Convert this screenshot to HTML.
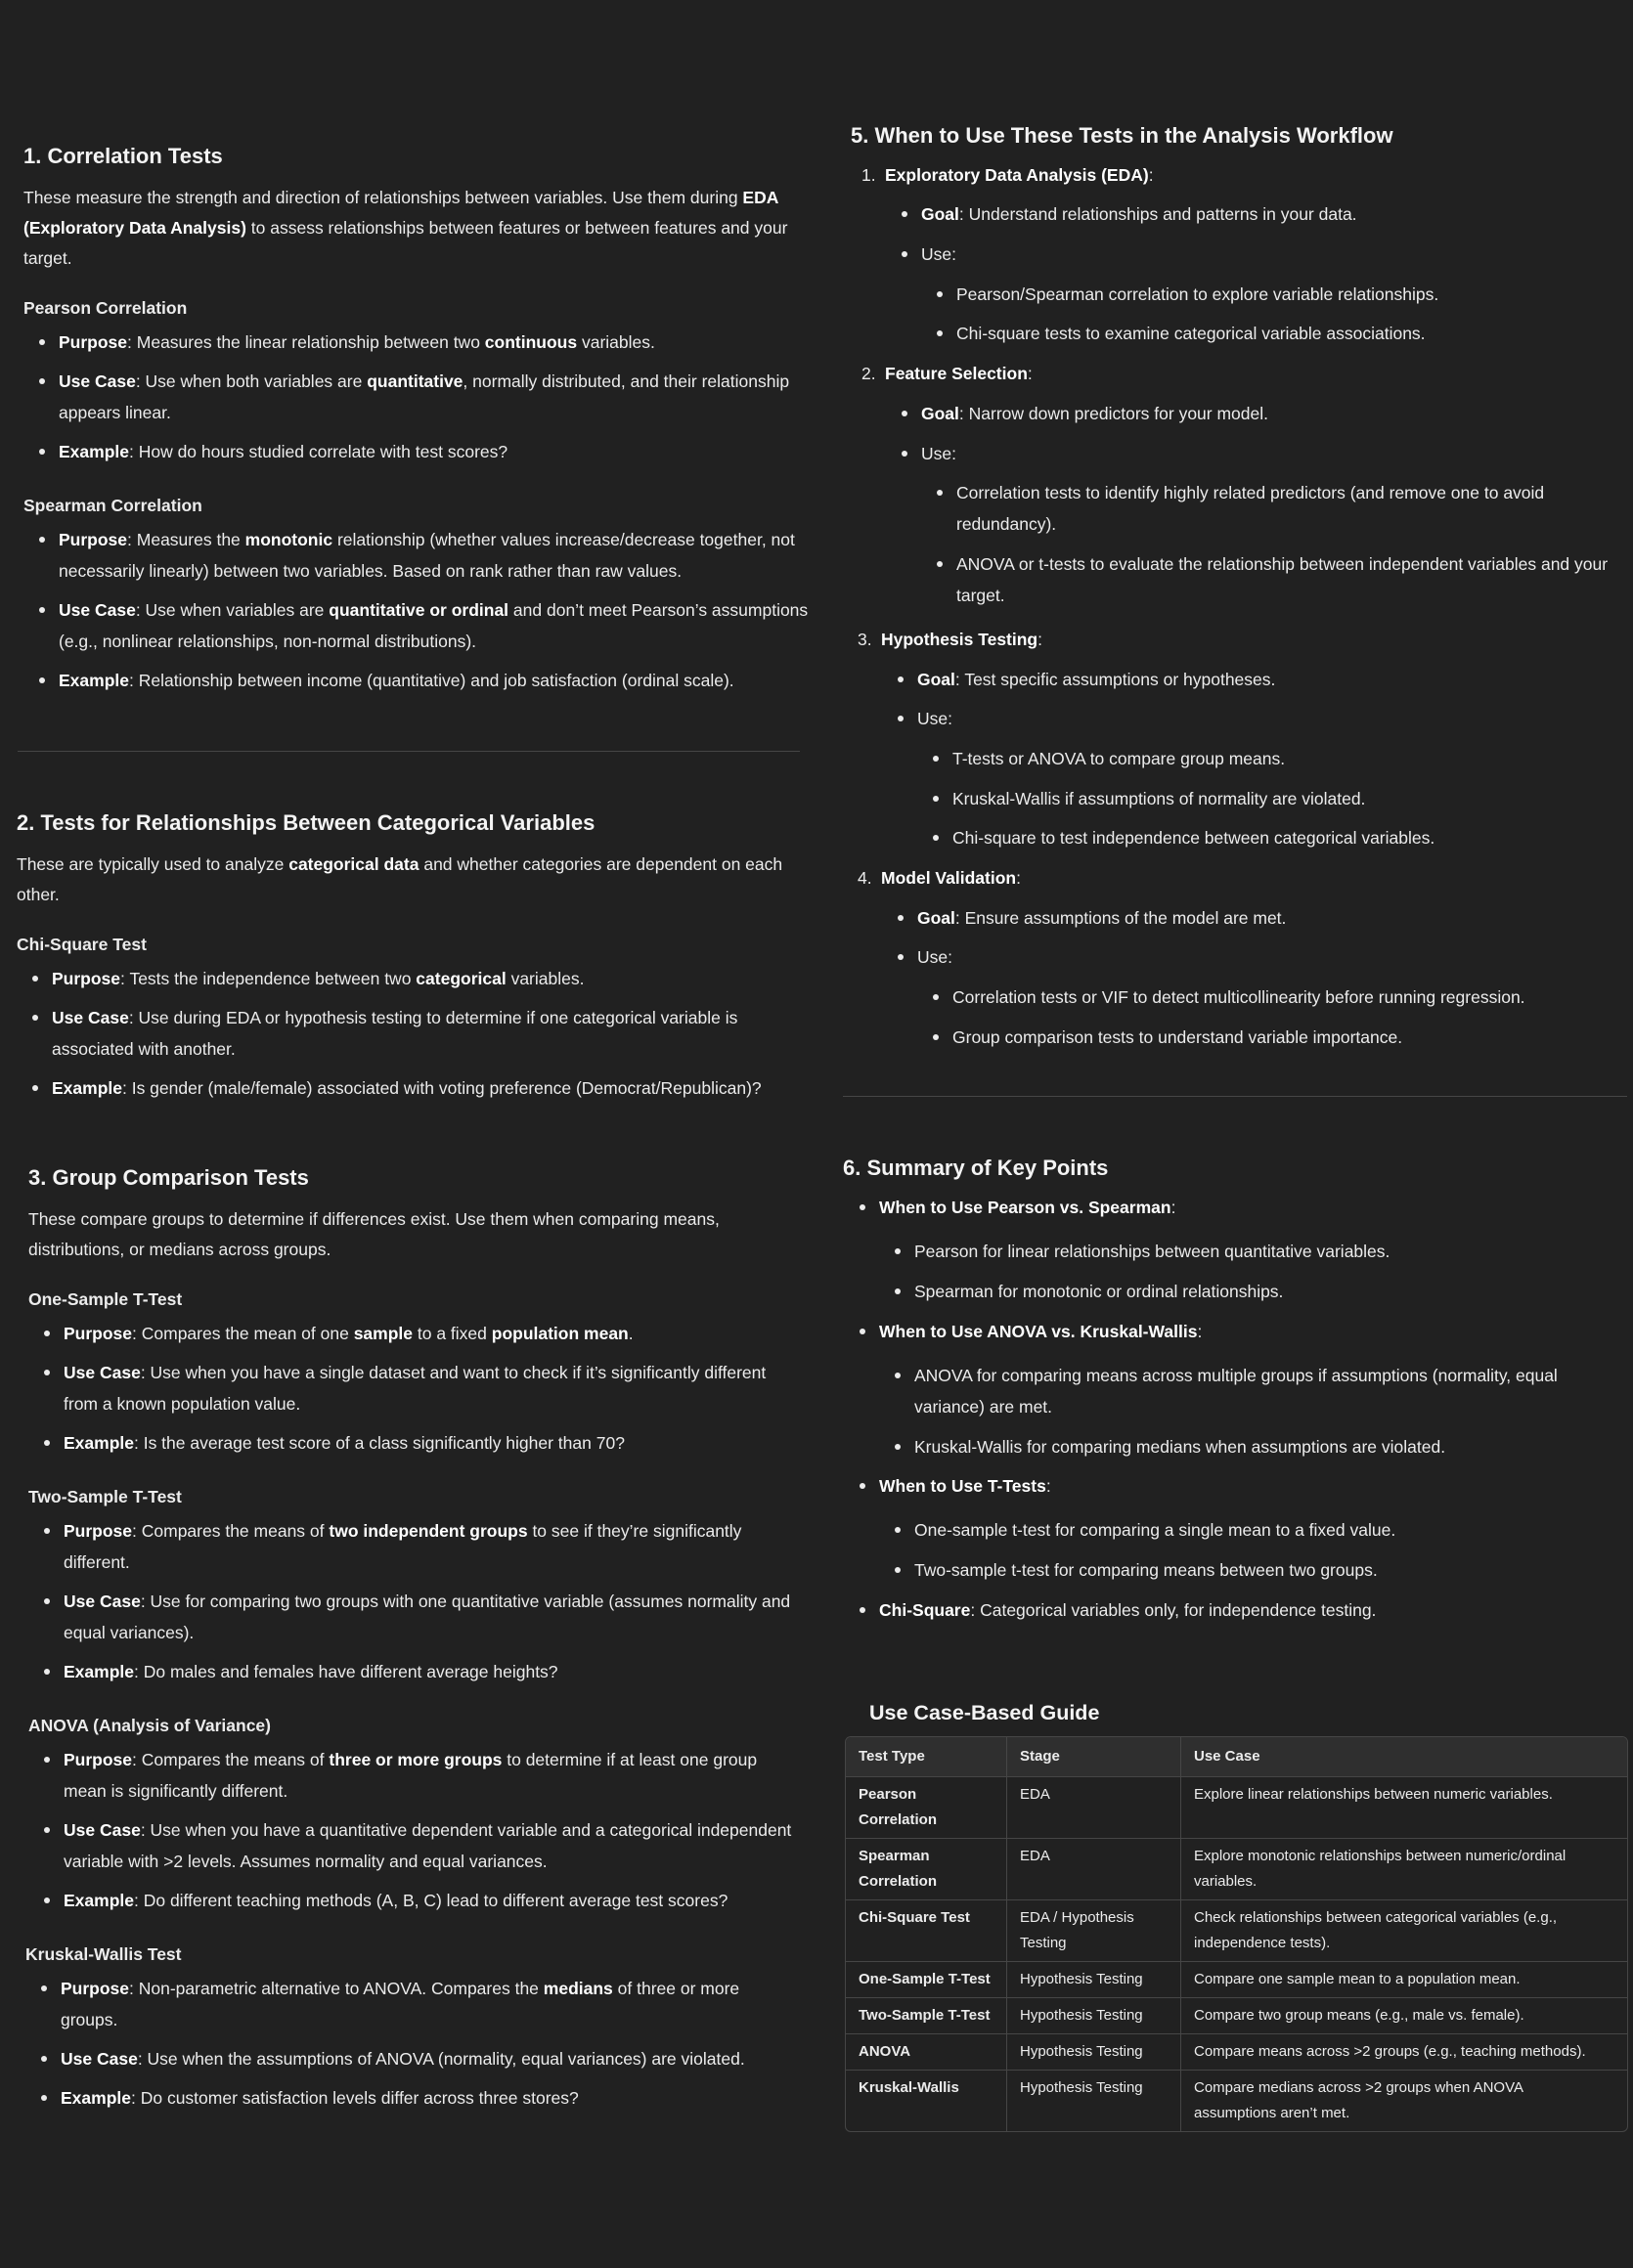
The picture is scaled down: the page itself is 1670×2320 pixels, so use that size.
<!DOCTYPE html>
<html><head><meta charset="utf-8"><style>
html,body{margin:0;padding:0}
body{width:1670px;height:2320px;background:#212121;color:#ececec;font-family:"Liberation Sans",Arial,sans-serif;font-size:17.5px;position:relative;overflow:hidden}
.s{position:absolute;white-space:nowrap}
h3{font-size:22px;font-weight:bold;margin:0;line-height:30px;color:#f4f4f4}
p{margin:12px 0 0;line-height:31px}
h4{font-size:17.5px;font-weight:bold;margin:24px 0 0;line-height:22px}
ul+h4{margin-top:28px}
ul,ol{margin:0;padding:0;list-style:none}
li{position:relative;margin-top:8px;line-height:32px}
.r li{margin-top:8.7px}
.r2 li{margin-top:8.9px}
ul.b>li::before{content:"";position:absolute;left:-20px;top:13px;width:6px;height:6px;border-radius:50%;background:#ececec}
b{font-weight:bold;color:#fff}
.hr{position:absolute;height:1px;background:#464646}
table{position:absolute;border-collapse:separate;border-spacing:0;font-size:15px;border:1px solid #464646;border-radius:6px;overflow:hidden}
td,th{border-right:1px solid #464646;border-bottom:1px solid #464646;padding:5px 13px 5px 13px;line-height:26px;vertical-align:top;text-align:left;white-space:nowrap}
th{background:#2f2f2f;font-weight:bold;padding:7px 13px}
tr>*:last-child{border-right:none}
tr:last-child td{border-bottom:none}
td:first-child{font-weight:bold}
.hl{margin-left:36px;margin-top:5px}
</style></head><body>

<div class="s" style="left:24px;top:145px">
<h3>1. Correlation Tests</h3>
<p>These measure the strength and direction of relationships between variables. Use them during <b>EDA</b><br><b>(Exploratory Data Analysis)</b> to assess relationships between features or between features and your<br>target.</p>
<h4>Pearson Correlation</h4>
<ul class="b hl">
<li><b>Purpose</b>: Measures the linear relationship between two <b>continuous</b> variables.</li>
<li><b>Use Case</b>: Use when both variables are <b>quantitative</b>, normally distributed, and their relationship<br>appears linear.</li>
<li><b>Example</b>: How do hours studied correlate with test scores?</li>
</ul>
<h4>Spearman Correlation</h4>
<ul class="b hl">
<li><b>Purpose</b>: Measures the <b>monotonic</b> relationship (whether values increase/decrease together, not<br>necessarily linearly) between two variables. Based on rank rather than raw values.</li>
<li><b>Use Case</b>: Use when variables are <b>quantitative or ordinal</b> and don’t meet Pearson’s assumptions<br>(e.g., nonlinear relationships, non-normal distributions).</li>
<li><b>Example</b>: Relationship between income (quantitative) and job satisfaction (ordinal scale).</li>
</ul>
</div>

<div class="hr" style="left:18px;top:768px;width:800px"></div>

<div class="s" style="left:17px;top:827px">
<h3>2. Tests for Relationships Between Categorical Variables</h3>
<p>These are typically used to analyze <b>categorical data</b> and whether categories are dependent on each<br>other.</p>
<h4>Chi-Square Test</h4>
<ul class="b hl">
<li><b>Purpose</b>: Tests the independence between two <b>categorical</b> variables.</li>
<li><b>Use Case</b>: Use during EDA or hypothesis testing to determine if one categorical variable is<br>associated with another.</li>
<li><b>Example</b>: Is gender (male/female) associated with voting preference (Democrat/Republican)?</li>
</ul>
</div>

<div class="s" style="left:29px;top:1190px">
<h3>3. Group Comparison Tests</h3>
<p>These compare groups to determine if differences exist. Use them when comparing means,<br>distributions, or medians across groups.</p>
<h4>One-Sample T-Test</h4>
<ul class="b hl">
<li><b>Purpose</b>: Compares the mean of one <b>sample</b> to a fixed <b>population mean</b>.</li>
<li><b>Use Case</b>: Use when you have a single dataset and want to check if it’s significantly different<br>from a known population value.</li>
<li><b>Example</b>: Is the average test score of a class significantly higher than 70?</li>
</ul>
<h4>Two-Sample T-Test</h4>
<ul class="b hl">
<li><b>Purpose</b>: Compares the means of <b>two independent groups</b> to see if they’re significantly<br>different.</li>
<li><b>Use Case</b>: Use for comparing two groups with one quantitative variable (assumes normality and<br>equal variances).</li>
<li><b>Example</b>: Do males and females have different average heights?</li>
</ul>
<h4>ANOVA (Analysis of Variance)</h4>
<ul class="b hl">
<li><b>Purpose</b>: Compares the means of <b>three or more groups</b> to determine if at least one group<br>mean is significantly different.</li>
<li><b>Use Case</b>: Use when you have a quantitative dependent variable and a categorical independent<br>variable with &gt;2 levels. Assumes normality and equal variances.</li>
<li><b>Example</b>: Do different teaching methods (A, B, C) lead to different average test scores?</li>
</ul>
<h4 style="margin-left:-3px">Kruskal-Wallis Test</h4>
<ul class="b hl" style="margin-left:33px">
<li><b>Purpose</b>: Non-parametric alternative to ANOVA. Compares the <b>medians</b> of three or more<br>groups.</li>
<li><b>Use Case</b>: Use when the assumptions of ANOVA (normality, equal variances) are violated.</li>
<li><b>Example</b>: Do customer satisfaction levels differ across three stores?</li>
</ul>
</div>

<div class="s r" style="left:870px;top:124px">
<h3>5. When to Use These Tests in the Analysis Workflow</h3>
<ol style="margin-left:35px;margin-top:6px">
<li><span style="position:absolute;left:-24px">1.</span><b>Exploratory Data Analysis (EDA)</b>:
<ul class="b" style="margin-left:37px"><li><b>Goal</b>: Understand relationships and patterns in your data.</li>
<li>Use:<ul class="b" style="margin-left:36px"><li>Pearson/Spearman correlation to explore variable relationships.</li><li>Chi-square tests to examine categorical variable associations.</li></ul></li></ul></li>
<li><span style="position:absolute;left:-24px">2.</span><b>Feature Selection</b>:
<ul class="b" style="margin-left:37px"><li><b>Goal</b>: Narrow down predictors for your model.</li>
<li>Use:<ul class="b" style="margin-left:36px"><li>Correlation tests to identify highly related predictors (and remove one to avoid<br>redundancy).</li><li>ANOVA or t-tests to evaluate the relationship between independent variables and your<br>target.</li></ul></li></ul></li>
<li style="margin-top:13px;left:-4px"><span style="position:absolute;left:-24px">3.</span><b>Hypothesis Testing</b>:
<ul class="b" style="margin-left:37px"><li><b>Goal</b>: Test specific assumptions or hypotheses.</li>
<li>Use:<ul class="b" style="margin-left:36px"><li>T-tests or ANOVA to compare group means.</li><li>Kruskal-Wallis if assumptions of normality are violated.</li><li>Chi-square to test independence between categorical variables.</li></ul></li></ul></li>
<li style="left:-4px"><span style="position:absolute;left:-24px">4.</span><b>Model Validation</b>:
<ul class="b" style="margin-left:37px"><li><b>Goal</b>: Ensure assumptions of the model are met.</li>
<li>Use:<ul class="b" style="margin-left:36px"><li>Correlation tests or VIF to detect multicollinearity before running regression.</li><li>Group comparison tests to understand variable importance.</li></ul></li></ul></li>
</ol>
</div>

<div class="hr" style="left:862px;top:1121px;width:802px"></div>

<div class="s r2" style="left:862px;top:1180px">
<h3>6. Summary of Key Points</h3>
<ul class="b" style="margin-left:37px;margin-top:3px">
<li><b>When to Use Pearson vs. Spearman</b>:
<ul class="b" style="margin-left:36px"><li style="margin-top:13px">Pearson for linear relationships between quantitative variables.</li><li>Spearman for monotonic or ordinal relationships.</li></ul></li>
<li><b>When to Use ANOVA vs. Kruskal-Wallis</b>:
<ul class="b" style="margin-left:36px"><li style="margin-top:13px">ANOVA for comparing means across multiple groups if assumptions (normality, equal<br>variance) are met.</li><li>Kruskal-Wallis for comparing medians when assumptions are violated.</li></ul></li>
<li><b>When to Use T-Tests</b>:
<ul class="b" style="margin-left:36px"><li style="margin-top:13px">One-sample t-test for comparing a single mean to a fixed value.</li><li>Two-sample t-test for comparing means between two groups.</li></ul></li>
<li><b>Chi-Square</b>: Categorical variables only, for independence testing.</li>
</ul>
</div>

<div class="s" style="left:889px;top:1737px"><h3 style="font-size:21.5px">Use Case-Based Guide</h3></div>

<table style="left:864px;top:1776px;width:801px">
<colgroup><col style="width:165px"><col style="width:178px"><col></colgroup>
<tr><th>Test Type</th><th>Stage</th><th>Use Case</th></tr>
<tr><td>Pearson<br>Correlation</td><td>EDA</td><td>Explore linear relationships between numeric variables.</td></tr>
<tr><td>Spearman<br>Correlation</td><td>EDA</td><td>Explore monotonic relationships between numeric/ordinal<br>variables.</td></tr>
<tr><td>Chi-Square Test</td><td>EDA / Hypothesis<br>Testing</td><td>Check relationships between categorical variables (e.g.,<br>independence tests).</td></tr>
<tr><td>One-Sample T-Test</td><td>Hypothesis Testing</td><td>Compare one sample mean to a population mean.</td></tr>
<tr><td>Two-Sample T-Test</td><td>Hypothesis Testing</td><td>Compare two group means (e.g., male vs. female).</td></tr>
<tr><td>ANOVA</td><td>Hypothesis Testing</td><td>Compare means across &gt;2 groups (e.g., teaching methods).</td></tr>
<tr><td>Kruskal-Wallis</td><td>Hypothesis Testing</td><td>Compare medians across &gt;2 groups when ANOVA<br>assumptions aren’t met.</td></tr>
</table>

</body></html>
